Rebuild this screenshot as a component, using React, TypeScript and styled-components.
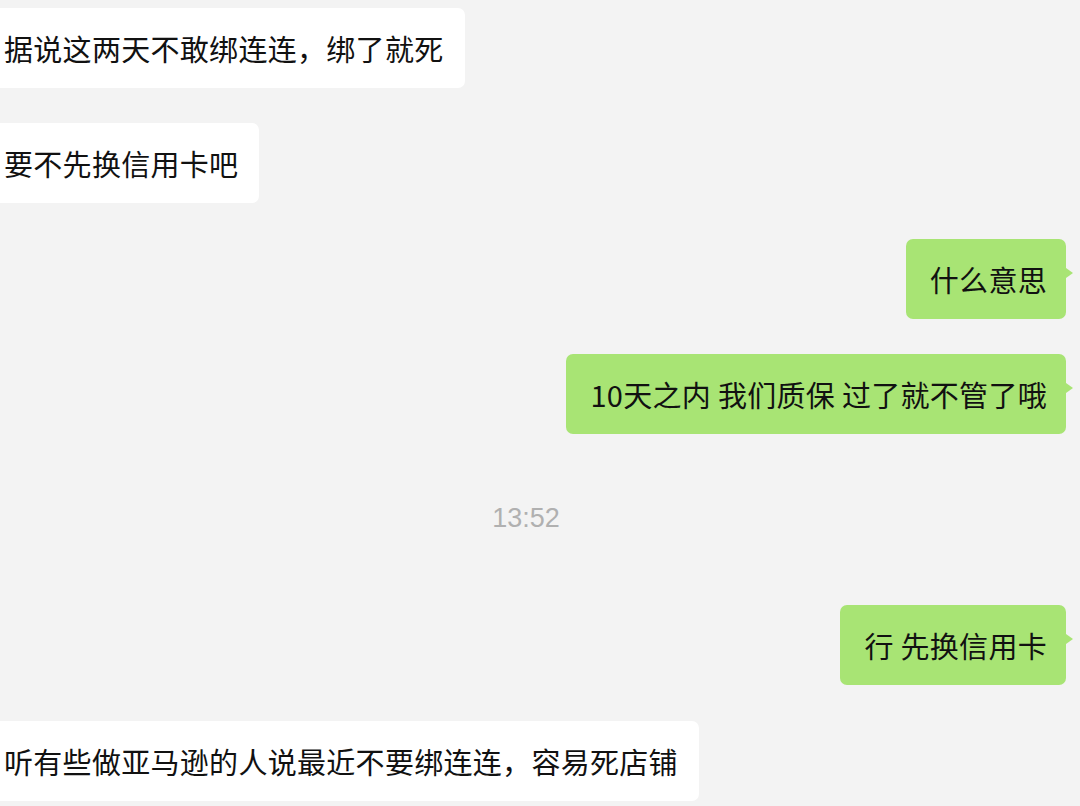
import React from "react";
import styled, { createGlobalStyle } from "styled-components";

type Message = {
    id: number
    kind: 'in' | 'out' | 'time'
    text: string
}

const messages: Message[] = [
    { id: 1, kind: 'in', text: '据说这两天不敢绑连连，绑了就死' },
    { id: 2, kind: 'in', text: '要不先换信用卡吧' },
    { id: 3, kind: 'out', text: '什么意思' },
    { id: 4, kind: 'out', text: '10天之内 我们质保 过了就不管了哦' },
    { id: 5, kind: 'time', text: '13:52' },
    { id: 6, kind: 'out', text: '行 先换信用卡' },
    { id: 7, kind: 'in', text: '听有些做亚马逊的人说最近不要绑连连，容易死店铺' },
]

const GlobalStyle = createGlobalStyle`
    html, body {
        margin: 0;
        padding: 0;
        background: #f3f3f3;
        overflow: hidden;
    }
    body {
        font-family: "Noto Sans CJK SC", "Noto Sans", sans-serif;
    }
`

const ChatWrapper = styled.div`
    width: 1080px;
    height: 806px;
    box-sizing: border-box;
    padding: 8px 14px 0 0;
    display: flex;
    flex-direction: column;
    gap: 35.3px;
    background: #f3f3f3;
    overflow: hidden;
`

const Row = styled.div<{ $side: 'in' | 'out' }>`
    display: flex;
    justify-content: ${props => props.$side === 'out' ? 'flex-end' : 'flex-start'};
`

const Bubble = styled.div<{ $side: 'in' | 'out' }>`
    position: relative;
    height: 80px;
    box-sizing: border-box;
    display: flex;
    align-items: center;
    border-radius: 7px;
    font-size: 29px;
    line-height: 40px;
    color: #111;
    white-space: nowrap;
    letter-spacing: 0.3px;
    background: ${props => props.$side === 'out' ? '#a8e474' : '#ffffff'};
    padding: ${props => props.$side === 'out' ? '0 19px 0 24px' : '0 21px 0 24px'};
    margin-left: ${props => props.$side === 'in' ? '-20px' : '0'};

    ${props => props.$side === 'out' && `
        &::after {
            content: '';
            position: absolute;
            right: -7px;
            top: 29px;
            border-top: 5px solid transparent;
            border-bottom: 5px solid transparent;
            border-left: 7px solid #a8e474;
        }
    `}
`

const TimeRow = styled.div`
    display: flex;
    justify-content: center;
    padding: 34px 14px 37px 0;
    font-family: "Liberation Sans", "Noto Sans", sans-serif;
    font-size: 27px;
    line-height: 30px;
    color: #b0b0b0;
`

export const App: React.FC = () => {
    return <>
        <GlobalStyle />
        <ChatWrapper>
            {messages.map(m => m.kind === 'time'
                ? <TimeRow key={m.id}>{m.text}</TimeRow>
                : <Row key={m.id} $side={m.kind}>
                    <Bubble $side={m.kind}>{m.text}</Bubble>
                </Row>
            )}
        </ChatWrapper>
    </>
}

export default App;
